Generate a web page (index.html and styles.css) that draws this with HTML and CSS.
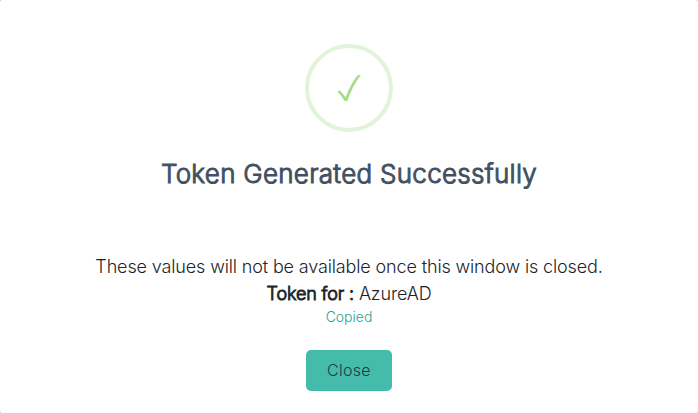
FILE: index.html
```html
<!DOCTYPE html>
<html lang="en">
<head>
<meta charset="utf-8">
<title>Token Generated</title>
<link rel="stylesheet" href="styles.css">
</head>
<body>
<main class="modal">
  <div class="icon">
    <svg viewBox="0 0 88 88" width="88" height="88" aria-hidden="true">
      <circle class="ring" cx="44" cy="44" r="42"/>
      <path class="check" d="M32.5 47.4 34.8 46.2 40.7 53.2C43.8 44.5 48 37 52.8 31L55.8 31C50.2 38.5 45.7 47 42.3 57L39.7 57C37.8 53.8 35.3 50.6 32.5 47.4Z"/>
    </svg>
  </div>
  <h2 class="title">Token Generated Successfully</h2>
  <div class="content">
    <p class="line">These values will not be available once this window is closed.</p>
    <p class="line"><b>Token for :</b> AzureAD</p>
    <p class="copied">Copied</p>
  </div>
  <button class="close" type="button">Close</button>
</main>
</body>
</html>
```
FILE: styles.css
```css
* { box-sizing: border-box; }
body { margin: 0; background: #bbb; font-family: Inter, sans-serif; }
.modal { height: 413px; padding-top: 44px; display: flex; flex-direction: column; align-items: center; border-radius: 2px; background: #fff; }
.icon { height: 88px; }
.icon svg { display: block; }
.ring { fill: none; stroke: #e1f3d8; stroke-width: 4; }
.check { fill: #a5dc86; }
.title { margin: 24px 0 0; font-size: 26px; line-height: 36px; font-weight: 300; letter-spacing: 0.28px; color: #435061; -webkit-text-stroke: 1px #435061; }
.content { margin-top: 61px; text-align: center; color: #212529; }
.line { margin: 0; font-size: 18px; line-height: 27px; font-weight: 300; letter-spacing: -0.14px; }
.line b { font-weight: 300; -webkit-text-stroke: 0.9px #212529; }
.copied { margin: 0; font-size: 14px; line-height: 20px; font-weight: 300; color: #1fa693; }
.close { margin-top: 23px; width: 86px; height: 41px; padding: 0 0 1px; border: 0; border-radius: 5px; background: #45bbac; color: #1c3b40; font: 300 16px Inter, sans-serif; letter-spacing: 0.3px; }
```
